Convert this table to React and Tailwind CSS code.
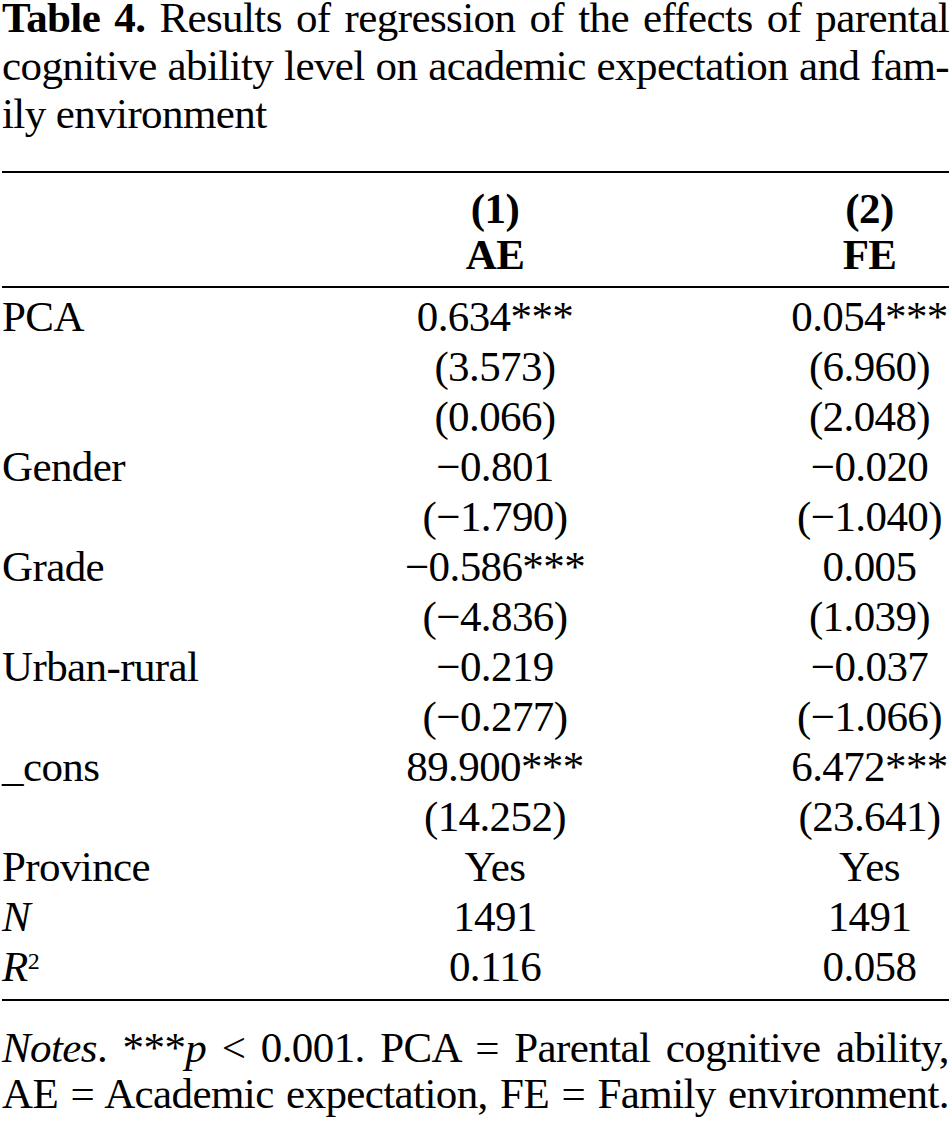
import React from 'react'

const rows = [
  { label: 'PCA', a: '0.634***', b: '0.054***' },
  { label: '', a: '(3.573)', b: '(6.960)' },
  { label: '', a: '(0.066)', b: '(2.048)' },
  { label: 'Gender', a: '−0.801', b: '−0.020' },
  { label: '', a: '(−1.790)', b: '(−1.040)' },
  { label: 'Grade', a: '−0.586***', b: '0.005' },
  { label: '', a: '(−4.836)', b: '(1.039)' },
  { label: 'Urban-rural', a: '−0.219', b: '−0.037' },
  { label: '', a: '(−0.277)', b: '(−1.066)' },
  { label: '_cons', a: '89.900***', b: '6.472***' },
  { label: '', a: '(14.252)', b: '(23.641)' },
  { label: 'Province', a: 'Yes', b: 'Yes' },
  { label: <span className="italic">N</span>, a: '1491', b: '1491' },
  {
    label: (
      <span>
        <span className="italic">R</span>
        <sup className="text-[24px]">2</sup>
      </span>
    ),
    a: '0.116',
    b: '0.058',
  },
]

const Row = ({ label, a, b }) => (
  <div className="grid grid-cols-[398px_190px_200px_1fr] leading-[50px] h-[50px]">
    <div className="whitespace-nowrap">{label}</div>
    <div className="text-center whitespace-nowrap">{a}</div>
    <div></div>
    <div className="text-center whitespace-nowrap">{b}</div>
  </div>
)

const App = () => {
  return (
    <div className="w-[951px] h-[1124px] overflow-hidden bg-white text-black px-[2px] font-['Liberation_Serif','Times_New_Roman',serif] text-[43px] tracking-[-0.6px]">
      <div>
        <p className="leading-[35px] text-justify [text-align-last:justify] whitespace-nowrap">
          <span className="font-bold">Table 4.</span> Results of regression of the effects of parental
        </p>
        <p className="mt-[7px] leading-[48px] text-justify [text-align-last:justify] whitespace-nowrap">
          cognitive ability level on academic expectation and fam-
        </p>
        <p className="leading-[48px]">ily environment</p>
      </div>

      <div className="mt-[33px] h-[2px] bg-black"></div>

      <div className="pt-[13px] pb-[8px] leading-[46px] font-bold grid grid-cols-[398px_190px_200px_1fr]">
        <div></div>
        <div className="text-center">
          <div>(1)</div>
          <div>AE</div>
        </div>
        <div></div>
        <div className="text-center">
          <div>(2)</div>
          <div>FE</div>
        </div>
      </div>

      <div className="h-[2px] bg-black"></div>

      <div className="pt-[4px] pb-[7px]">
        {rows.map((r, i) => (
          <Row key={i} label={r.label} a={r.a} b={r.b} />
        ))}
      </div>

      <div className="h-[2px] bg-black"></div>

      <div className="mt-[24px] leading-[46px]">
        <p className="text-justify [text-align-last:justify] whitespace-nowrap">
          <span className="italic">Notes</span>. ***<span className="italic">p</span> &lt; 0.001. PCA = Parental cognitive ability,
        </p>
        <p className="text-justify [text-align-last:justify] whitespace-nowrap">
          AE = Academic expectation, FE = Family environment.
        </p>
      </div>
    </div>
  )
}

export default App
